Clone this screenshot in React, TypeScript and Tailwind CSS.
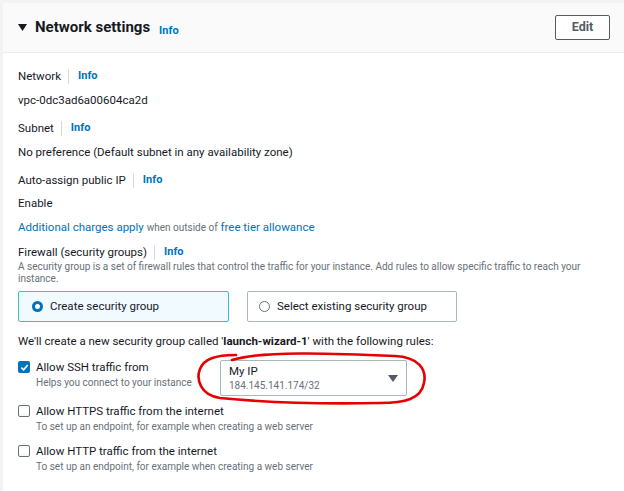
const FONT = "font-['Roboto','Liberation_Sans',sans-serif]";

function InfoLink() {
  return <span className="text-[11px] font-bold text-[#0073bb]">Info</span>;
}

function FieldLabel({ label }: { label: string }) {
  return (
    <div className="flex items-center text-[11.5px] leading-[18px] text-[#16191f]">
      <span>{label}</span>
      <span className="ml-[7px] mr-[9px] h-[15px] w-px bg-[#d5dbdb]" />
      <InfoLink />
    </div>
  );
}

function Checkbox({ checked }: { checked?: boolean }) {
  if (checked) {
    return (
      <span className="mt-[3px] flex h-[12px] w-[12px] flex-shrink-0 items-center justify-center rounded-[2px] bg-[#0073bb]">
        <svg width="9" height="9" viewBox="0 0 10 10" fill="none">
          <path d="M1.5 5.2 L4 7.6 L8.6 2.2" stroke="white" strokeWidth="1.8" />
        </svg>
      </span>
    );
  }
  return (
    <span className="mt-[3px] h-[12px] w-[12px] flex-shrink-0 rounded-[2px] border border-[#687078] bg-white" />
  );
}

function Rule({
  checked,
  title,
  hint,
}: {
  checked?: boolean;
  title: string;
  hint: string;
}) {
  return (
    <div className="flex gap-[6px]">
      <Checkbox checked={checked} />
      <div>
        <div className="text-[11.5px] leading-[18px] text-[#16191f]">{title}</div>
        <div className="text-[10px] leading-[14px] text-[#687078]">{hint}</div>
      </div>
    </div>
  );
}

export default function App() {
  return (
    <div className={`${FONT} relative h-[491px] w-[624px] overflow-hidden bg-[#f2f3f3] pl-[3px] pt-[3px]`}>
      <div className="h-full bg-white">
        {/* header */}
        <div className="flex h-[50px] items-center justify-between border-b border-[#eaeded] bg-[#fafafa] pl-[15px] pr-[14px]">
          <div className="flex items-center">
            <svg width="9" height="7" viewBox="0 0 9 7" className="mr-[8px]">
              <path d="M0 0 H9 L4.5 7 Z" fill="#16191f" />
            </svg>
            <span className="text-[15px] font-bold text-[#16191f]">Network settings</span>
            <span className="ml-[9px] mt-[3px]">
              <InfoLink />
            </span>
          </div>
          <button className="h-[25px] w-[55px] rounded-[2px] border border-[#545b64] bg-white text-[12.5px] font-bold text-[#545b64]">
            Edit
          </button>
        </div>

        {/* body */}
        <div className="pl-[15px] pr-[20px] pt-[14px]">
          <FieldLabel label="Network" />
          <div className="mt-[6px] text-[11.5px] leading-[18px] text-[#16191f]">vpc-0dc3ad6a00604ca2d</div>

          <div className="mt-[10px]">
            <FieldLabel label="Subnet" />
          </div>
          <div className="mt-[6px] text-[11.5px] leading-[18px] text-[#16191f]">
            No preference (Default subnet in any availability zone)
          </div>

          <div className="mt-[10px]">
            <FieldLabel label="Auto-assign public IP" />
          </div>
          <div className="mt-[5px] text-[11.5px] leading-[18px] text-[#16191f]">Enable</div>

          <div className="mt-[6px] text-[11.5px] leading-[18px] text-[#0073bb]">
            Additional charges apply{' '}
            <span className="text-[10px] text-[#687078]">when outside of</span> free tier allowance
          </div>

          <div className="mt-[6px]">
            <FieldLabel label="Firewall (security groups)" />
          </div>
          <div className="text-[10px] leading-[12px] text-[#687078]">
            A security group is a set of firewall rules that control the traffic for your instance. Add rules to allow
            specific traffic to reach your instance.
          </div>

          <div className="mt-[6px] flex gap-[18px]">
            <div className="flex h-[31px] w-[211px] items-center gap-[7px] rounded-[2px] border border-[#44b9d6] bg-[#f1faff] px-[13px]">
              <span className="flex h-[11px] w-[11px] items-center justify-center rounded-full bg-[#0073bb]">
                <span className="h-[5px] w-[5px] rounded-full bg-white" />
              </span>
              <span className="text-[11.5px] text-[#16191f]">Create security group</span>
            </div>
            <div className="flex h-[31px] w-[210px] items-center gap-[7px] rounded-[2px] border border-[#aab7b8] bg-white px-[11px]">
              <span className="h-[11px] w-[11px] rounded-full border border-[#687078]" />
              <span className="text-[11.5px] text-[#16191f]">Select existing security group</span>
            </div>
          </div>

          <div className="mt-[10px] text-[11.5px] leading-[18px] text-[#16191f]">
            We'll create a new security group called '<span className="font-bold">launch-wizard-1</span>' with the
            following rules:
          </div>

          <div className="mt-[8px] flex items-start">
            <div className="w-[202px]">
              <Rule checked title="Allow SSH traffic from" hint="Helps you connect to your instance" />
            </div>
            <div className="mt-[2px] flex h-[36px] w-[187px] items-center justify-between rounded-[2px] border border-[#aab7b8] bg-white pl-[8px] pr-[8px]">
              <div>
                <div className="text-[11.5px] leading-[16px] text-[#16191f]">My IP</div>
                <div className="text-[10px] leading-[14px] text-[#687078]">184.145.141.174/32</div>
              </div>
              <svg width="10" height="7" viewBox="0 0 10 7">
                <path d="M0 0 H10 L5 7 Z" fill="#545b64" />
              </svg>
            </div>
          </div>

          <div className="mt-[6px]">
            <Rule title="Allow HTTPS traffic from the internet" hint="To set up an endpoint, for example when creating a web server" />
          </div>
          <div className="mt-[8px]">
            <Rule title="Allow HTTP traffic from the internet" hint="To set up an endpoint, for example when creating a web server" />
          </div>
        </div>
      </div>

      {/* red hand-drawn annotation */}
      <svg className="pointer-events-none absolute left-0 top-0" width="624" height="491" viewBox="0 0 624 491">
        <path
          d="M232 360 C 260 351, 330 353, 395 356 C 418 357, 427 369, 424 383 C 421 399, 405 403, 380 403 C 330 404, 270 403, 220 398 C 200 395, 196 379, 200 369 C 204 359, 215 355, 236 355"
          fill="none"
          stroke="#e60000"
          strokeWidth="2.6"
          strokeLinecap="round"
        />
      </svg>
    </div>
  );
}
